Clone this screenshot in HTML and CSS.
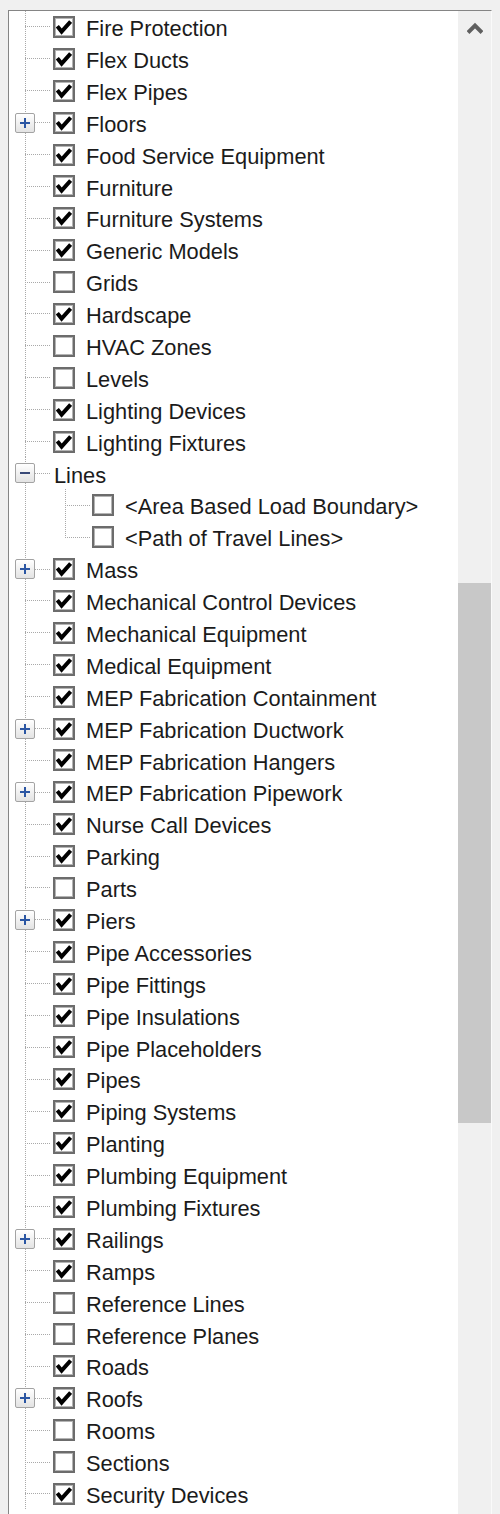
FILE: index.html
```html
<!DOCTYPE html>
<html>
<head>
<meta charset="utf-8">
<link rel="stylesheet" href="styles.css">
</head>
<body>
<div class="panel">
  <div class="tree" id="tree"></div>
  <div class="scrollbar">
    <div class="sb-btn">
      <svg width="16" height="13" viewBox="0 0 16 13"><path d="M1 11.5 L8 4.5 L15 11.5" fill="none" stroke="#5f5f5f" stroke-width="4" stroke-linejoin="miter"/></svg>
    </div>
    <div class="sb-track"><div class="sb-thumb"></div></div>
    <div class="sb-btn">
      <svg width="16" height="13" viewBox="0 0 16 13"><path d="M1 2 L8 9 L15 2" fill="none" stroke="#9a9a9a" stroke-width="4" stroke-linejoin="miter"/></svg>
    </div>
  </div>
</div>
<script src="app.js"></script>
</body>
</html>
```
FILE: app.js
```js
var rows = [
  ["Fire Protection",1,""],["Flex Ducts",1,""],["Flex Pipes",1,""],["Floors",1,"+"],
  ["Food Service Equipment",1,""],["Furniture",1,""],["Furniture Systems",1,""],["Generic Models",1,""],
  ["Grids",0,""],["Hardscape",1,""],["HVAC Zones",0,""],["Levels",0,""],
  ["Lighting Devices",1,""],["Lighting Fixtures",1,""],["Lines",-1,"-"],
  ["<Area Based Load Boundary>",0,"c1"],["<Path of Travel Lines>",0,"c2"],
  ["Mass",1,"+"],["Mechanical Control Devices",1,""],["Mechanical Equipment",1,""],["Medical Equipment",1,""],
  ["MEP Fabrication Containment",1,""],["MEP Fabrication Ductwork",1,"+"],["MEP Fabrication Hangers",1,""],
  ["MEP Fabrication Pipework",1,"+"],["Nurse Call Devices",1,""],["Parking",1,""],["Parts",0,""],
  ["Piers",1,"+"],["Pipe Accessories",1,""],["Pipe Fittings",1,""],["Pipe Insulations",1,""],
  ["Pipe Placeholders",1,""],["Pipes",1,""],["Piping Systems",1,""],["Planting",1,""],
  ["Plumbing Equipment",1,""],["Plumbing Fixtures",1,""],["Railings",1,"+"],["Ramps",1,""],
  ["Reference Lines",0,""],["Reference Planes",0,""],["Roads",1,""],["Roofs",1,"+"],
  ["Rooms",0,""],["Sections",0,""],["Security Devices",1,""]
];
var check = '<svg width="16" height="16" viewBox="0 0 16 16"><path d="M1.3 7.2 L5.6 12.6 L14.6 2.6" fill="none" stroke="#000" stroke-width="4" stroke-linejoin="miter" stroke-miterlimit="10"/></svg>';
var tree = document.getElementById("tree");
rows.forEach(function (r) {
  var row = document.createElement("div");
  row.className = "row";
  var g = document.createElement("div");
  var kind = r[2];
  if (kind === "c1" || kind === "c2") {
    g.className = "gutter child " + kind;
  } else {
    g.className = "gutter" + (kind === "-" ? " open" : "");
    if (kind === "+" || kind === "-") {
      var b = document.createElement("span");
      b.className = "exp";
      b.innerHTML = kind === "+" ? '<svg width="10" height="10" viewBox="0 0 10 10"><path d="M0 5 H10 M5 0 V10" stroke="#2b56a3" stroke-width="2"/></svg>'
                                 : '<svg width="10" height="10" viewBox="0 0 10 10"><path d="M0 5 H10" stroke="#3a4a78" stroke-width="2"/></svg>';
      g.appendChild(b);
    }
  }
  row.appendChild(g);
  if (r[1] !== -1) {
    var cb = document.createElement("span");
    cb.className = "cb";
    if (r[1] === 1) cb.innerHTML = check;
    row.appendChild(cb);
  }
  var l = document.createElement("span");
  l.className = "label";
  l.textContent = r[0];
  row.appendChild(l);
  tree.appendChild(row);
});
```
FILE: styles.css
```css
html, body {
  margin: 0;
  padding: 0;
  background: #f0f0f0;
}
body {
  height: 1514px;
  overflow: hidden;
}
.panel {
  margin: 10px 0 0 8px;
  width: 482px;
  height: 1530px;
  border-top: 1px solid #858585;
  border-left: 1px solid #858585;
  border-right: 1px solid #fafafa;
  display: flex;
  background: #fff;
}
.tree {
  flex: 1;
  background: #fff;
  font-family: "Liberation Sans", Arial, sans-serif;
  font-size: 21.8px;
  color: #1b1b1b;
}
.row {
  height: 31.9px;
  display: flex;
  align-items: center;
  white-space: nowrap;
}
.gutter {
  flex: none;
  width: 44px;
  height: 100%;
  box-sizing: border-box;
  padding-left: 6px;
  display: flex;
  align-items: center;
  background-image:
    repeating-linear-gradient(to bottom, #a9a9a9 0 1px, transparent 1px 2px),
    repeating-linear-gradient(to right, #a9a9a9 0 1px, transparent 1px 2px);
  background-size: 1px 100%, 26px 1px;
  background-position: 16px 0, 16px 50%;
  background-repeat: no-repeat;
}
.gutter.open {
  width: 45px;
}
.gutter.child {
  width: 83px;
  background-image:
    repeating-linear-gradient(to bottom, #a9a9a9 0 1px, transparent 1px 2px),
    repeating-linear-gradient(to bottom, #a9a9a9 0 1px, transparent 1px 2px),
    repeating-linear-gradient(to right, #a9a9a9 0 1px, transparent 1px 2px);
  background-size: 1px 100%, 1px 100%, 26px 1px;
  background-position: 16px 0, 56px 0, 56px 50%;
}
.gutter.c2 {
  background-size: 1px 100%, 1px 50%, 26px 1px;
}
.exp {
  width: 20px;
  height: 20px;
  box-sizing: border-box;
  border: 1px solid #a3a3a3;
  border-radius: 2px;
  background: linear-gradient(to bottom, #ffffff, #e3e3e3);
  display: flex;
  align-items: center;
  justify-content: center;
}
.cb {
  flex: none;
  width: 22px;
  height: 22px;
  box-sizing: border-box;
  border: 2px solid #6c6c6c;
  box-shadow: inset 0 0 0 1px #b4b4b4;
  background: #fff;
  margin-right: 11px;
  display: flex;
  align-items: center;
  justify-content: center;
}
.cb svg {
  display: block;
}
.label {
  line-height: 1;
  margin-top: 4px;
}
.scrollbar {
  flex: none;
  width: 33px;
  background: #f0f0f0;
  display: flex;
  flex-direction: column;
}
.sb-btn {
  height: 33px;
  flex: none;
  display: flex;
  align-items: center;
  justify-content: center;
}
.sb-track {
  flex: 1;
  padding-top: 539px;
}
.sb-thumb {
  height: 540px;
  background: #c8c8c8;
}
```
